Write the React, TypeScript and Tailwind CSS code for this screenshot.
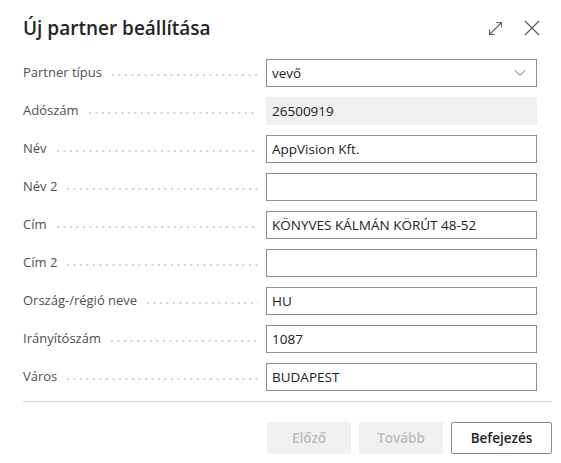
import React from 'react';

type Field = { label: string; value: string; kind?: 'select' | 'readonly' | 'text' };

const fields: Field[] = [
  { label: 'Partner típus', value: 'vevő', kind: 'select' },
  { label: 'Adószám', value: '26500919', kind: 'readonly' },
  { label: 'Név', value: 'AppVision Kft.' },
  { label: 'Név 2', value: '' },
  { label: 'Cím', value: 'KÖNYVES KÁLMÁN KÖRÚT 48-52' },
  { label: 'Cím 2', value: '' },
  { label: 'Ország-/régió neve', value: 'HU' },
  { label: 'Irányítószám', value: '1087' },
  { label: 'Város', value: 'BUDAPEST' },
];

const font = "[font-family:'Segoe_UI','Open_Sans','Noto_Sans',sans-serif]";

export default function App() {
  return (
    <div className={`w-[561px] h-[463px] bg-white ${font} text-[#212121] overflow-hidden`}>
      <header className="flex items-center justify-between pl-[23px] pr-[21px] pt-[10px] h-[46px]">
        <h1 className="text-[19px] font-semibold text-[#242424] leading-none">
          Új partner beállítása
        </h1>
        <div className="flex items-center gap-[21px] text-[#616161]">
          <svg width="15" height="15" viewBox="0 0 15 15" fill="none" stroke="currentColor" strokeWidth="1.1">
            <path d="M1.5 13.5 L13.5 1.5" />
            <path d="M8.5 1.5 H13.5 V6.5" />
            <path d="M1.5 8.5 V13.5 H6.5" />
          </svg>
          <svg width="16" height="16" viewBox="0 0 16 16" fill="none" stroke="currentColor" strokeWidth="1.3">
            <path d="M1 1 L15 15 M15 1 L1 15" />
          </svg>
        </div>
      </header>

      <div className="flex flex-col gap-[10px] pl-[23px] pr-[24px] pt-[13px]">
        {fields.map((f) => (
          <div key={f.label} className="flex items-center h-[28px]">
            <div className="w-[243px] flex items-center pr-[8px]">
              <span className="text-[13px] text-[#505050] whitespace-nowrap">{f.label}</span>
              <div className="flex-1 ml-[10px] mt-[3px] h-[2px] bg-[linear-gradient(to_right,#d2d2d2_2px,transparent_2px)] bg-[length:6.5px_2px] bg-repeat-x" />
            </div>
            {f.kind === 'readonly' ? (
              <div className="flex-1 h-[28px] bg-[#eef0f1] flex items-center px-[6px] text-[13.5px]">{f.value}</div>
            ) : (
              <div className="flex-1 h-[28px] border border-[#8a8d91] flex items-center justify-between pl-[5px] pr-[10px] text-[13.5px]">
                <span>{f.value}</span>
                {f.kind === 'select' && (
                  <svg width="12" height="8" viewBox="0 0 12 8" fill="none" stroke="#6b6b6b" strokeWidth="1">
                    <path d="M1 1.5 L6 6.5 L11 1.5" />
                  </svg>
                )}
              </div>
            )}
          </div>
        ))}
      </div>

      <div className="ml-[23px] mr-[9px] mt-[10px] h-px bg-[#d6d6d6]" />

      <div className="flex justify-end gap-[8px] pr-[9px] pt-[20px]">
        <button className="w-[84px] h-[32px] bg-[#f0f0f0] text-[#bdbdbd] text-[13.5px] font-semibold rounded-[2px]">Előző</button>
        <button className="w-[84px] h-[32px] bg-[#f0f0f0] text-[#bdbdbd] text-[13.5px] font-semibold rounded-[2px]">Tovább</button>
        <button className="w-[101px] h-[32px] bg-white border border-[#8a8a8a] text-[#242424] text-[13.5px] font-semibold rounded-[2px]">Befejezés</button>
      </div>
    </div>
  );
}
